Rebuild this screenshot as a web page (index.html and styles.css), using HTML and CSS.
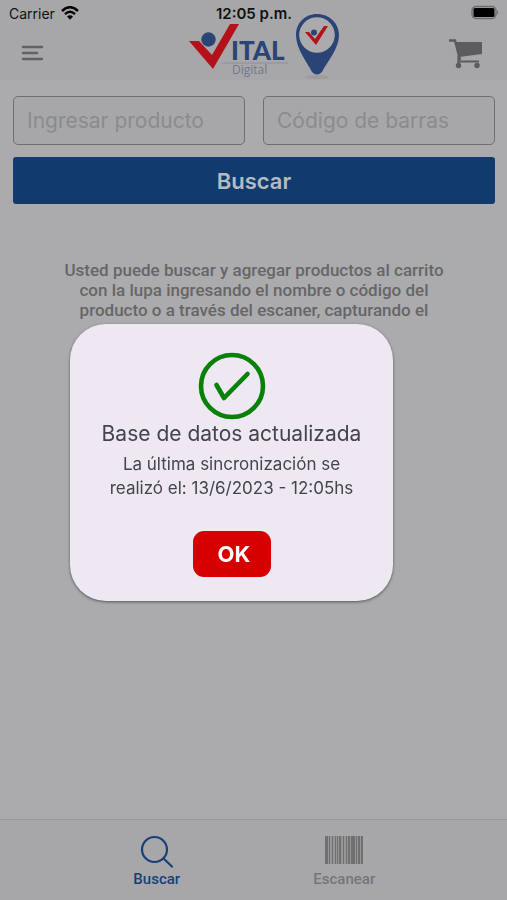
FILE: index.html
```html
<!DOCTYPE html>
<html lang="es">
<head>
    <meta charset="UTF-8">
    <meta name="viewport" content="width=device-width, initial-scale=1.0">
    <title>Vital Digital</title>
    <link rel="stylesheet" href="styles.css">
</head>
<body>
    <!-- Header -->
    <header class="header">
        <div class="status-bar">
            <span class="carrier">Carrier
                <svg width="18" height="14" viewBox="0 0 18 14">
                    <path d="M1 5 Q9 -2.500 17 5" fill="none" stroke="#050505" stroke-width="2.600"/>
                    <path d="M4 8.200 Q9 3.500 14 8.200" fill="none" stroke="#050505" stroke-width="2.400"/>
                    <path d="M6 10.500 Q9 8 12 10.500 L9 13.800Z" fill="#050505"/>
                </svg>
            </span>
            <span class="clock">12:05 p.m.</span>
            <svg class="battery" width="28" height="16" viewBox="0 0 28 16">
                <rect x="1" y="1.500" width="24" height="12" rx="4" fill="none" stroke="#6b6b6d" stroke-width="1.300"/>
                <rect x="2.500" y="3" width="21" height="9" rx="1.500" fill="#000"/>
                <path d="M26 5 Q28 7.500 26 10Z" fill="#6b6b6d"/>
            </svg>
        </div>
        <div class="nav">
            <button type="button" class="icon-btn" aria-label="Menú">
                <svg width="22" height="16" viewBox="0 0 22 16" stroke="#626264" stroke-width="2.400" stroke-linecap="round">
                    <path d="M2 2H21M2 8H16M2 14H21"/>
                </svg>
            </button>
            <svg class="logo" width="151" height="66" viewBox="-1 0 151 66">
                <ellipse cx="127" cy="63" rx="12" ry="2" fill="#9c9c9e"/>
                <path d="M-1 27H9L22 41L40 10H49L23 55Z" fill="#b3121b"/>
                <circle cx="18.500" cy="25.500" r="7.200" fill="#2a4475"/>
                <path d="M32 49H98" stroke="#8990a2" stroke-width="1"/>
                <text class="logo-name" x="41" y="46">ITAL</text>
                <text class="logo-sub" x="42" y="60">Digital</text>
                <path d="M127 0C115 0 106 9 106 21C106 35 117 48 122 58Q127 63 132 58C137 48 149 35 149 21C149 9 139 0 127 0Z" fill="#2a4475"/>
                <circle cx="127" cy="21" r="17.800" fill="#ababad"/>
                <path d="M115 18H119L125 25L134 12H138L126 31Z" fill="#b3121b"/>
                <circle cx="124" cy="18.500" r="3" fill="#2a4475"/>
            </svg>
            <button type="button" class="icon-btn" aria-label="Carrito">
                <svg width="35" height="31" viewBox="0 0 35 31">
                    <path d="M0 2.500H6L11 22" fill="none" stroke="#5c5c5e" stroke-width="2.400"/>
                    <path d="M6 4H33V16L10 19Z" fill="#5c5c5e"/>
                    <path d="M9 23.500H30M9.500 18V27" stroke="#5c5c5e" stroke-width="2.200"/>
                    <circle cx="9.500" cy="27.500" r="2.700" fill="#5c5c5e"/>
                    <circle cx="28" cy="27.500" r="2.700" fill="#5c5c5e"/>
                </svg>
            </button>
        </div>
    </header>

    <!-- Search -->
    <main class="content">
        <form class="search-form">
            <input type="text" placeholder="Ingresar producto" aria-label="Ingresar producto">
            <input type="text" placeholder="Código de barras" aria-label="Código de barras">
            <button type="button" class="search-btn">Buscar</button>
        </form>
        <p class="help-text">Usted puede buscar y agregar productos al carrito con la lupa ingresando el nombre o código del producto o a través del escaner, capturando el código de barras del mismo.</p>
    </main>

    <!-- Bottom tabs -->
    <nav class="tabs">
        <a href="#buscar" class="tab active">
            <svg width="34" height="34" viewBox="0 0 34 34" fill="none" stroke="#173f78" stroke-width="2.200" stroke-linecap="round">
                <circle cx="14.500" cy="14.500" r="12.500"/>
                <path d="M23.500 23.500L32 31.500"/>
            </svg>
            Buscar
        </a>
        <a href="#escanear" class="tab">
            <svg width="38" height="34" viewBox="0 0 38 34" fill="#707072">
                <path d="M0 1H3V29H0ZM4 1H5V29H4ZM7 1H8V29H7ZM10 1H11V29H10ZM12 1H13V29H12ZM14 1H16V29H14ZM18 1H19V29H18ZM21 1H22V29H21ZM23 1H25V29H23ZM26 1H30V29H26ZM31 1H32V29H31ZM33 1H35V29H33ZM36 1H38V29H36Z"/>
                <path d="M0 1H38V29H0Z" opacity=".3"/>
            </svg>
            Escanear
        </a>
    </nav>

    <!-- Sync dialog -->
    <div class="overlay">
        <div class="dialog" role="dialog" aria-labelledby="dialogTitle">
            <svg width="68" height="68" viewBox="0 0 68 68" fill="none" stroke="#078207">
                <circle cx="34" cy="34" r="31" stroke-width="4.600"/>
                <path d="M18.500 33L26 46L49.500 22" stroke-width="4.600" stroke-linecap="round" stroke-linejoin="round"/>
            </svg>
            <h1 id="dialogTitle">Base de datos actualizada</h1>
            <p>La última sincronización se realizó el: 13/6/2023 - 12:05hs</p>
            <button type="button" class="ok-btn">OK</button>
        </div>
    </div>
</body>
</html>
```
FILE: styles.css
```css
* { margin: 0; padding: 0; box-sizing: border-box; }
body {
    font-family: Inter, "Liberation Sans", sans-serif;
    background-color: #ababad;
    display: flex;
    flex-direction: column;
    min-height: 100vh;
}
button {
    border: none;
    font-family: inherit;
    cursor: pointer;
}
svg {
    display: block;
}

/* Header */
.header {
    position: relative;
    background-color: #a7a7a9;
}
.status-bar {
    position: absolute;
    top: 0;
    left: 0;
    right: 0;
    height: 26px;
    padding: 0 8px 0 9px;
    display: grid;
    grid-template-columns: 1fr auto 1fr;
    align-items: center;
    font-size: 14px;
    color: #111;
}
.carrier {
    display: flex;
    align-items: center;
    gap: 6px;
}
.clock {
    font-size: 15px;
    font-weight: 600;
}
.battery {
    justify-self: end;
}
.nav {
    display: flex;
    justify-content: space-between;
    align-items: center;
    padding: 14px 23px 0 21px;
}
.icon-btn {
    background: none;
    padding-top: 12px;
}
.logo {
    margin-left: 36px;
}
.logo-name {
    font-family: Lato, sans-serif;
    font-size: 26px;
    font-weight: 900;
    fill: #2a4475;
}
.logo-sub {
    font-family: "Open Sans", sans-serif;
    font-size: 12px;
    fill: #70778d;
}

/* Search */
.content {
    flex: 1;
    padding: 16px 12px 0 13px;
}
.search-form {
    display: grid;
    grid-template-columns: 1fr 1fr;
    gap: 12px 18px;
}
.search-form input {
    width: 100%;
    height: 49px;
    padding: 0 13px;
    border: 1px solid #6f6f71;
    border-radius: 5px;
    background-color: #a7a7a9;
    font-family: inherit;
    font-size: 21px;
}
.search-form input::placeholder {
    color: #8b8b8d;
}
.search-btn {
    grid-column: 1 / 3;
    height: 47px;
    border-radius: 3px;
    background-color: #123b6d;
    color: #b7bac2;
    font-size: 22px;
    font-weight: 600;
}
.help-text {
    margin: 56px 45px 0;
    font-family: Roboto, sans-serif;
    font-size: 17px;
    font-weight: 500;
    line-height: 20px;
    text-align: center;
    color: #666668;
}

/* Bottom tabs */
.tabs {
    display: flex;
    padding: 0 69px 0 63px;
    height: 81px;
    background-color: #a7a7a9;
    border-top: 1px solid #98989a;
}
.tab {
    flex: 1;
    display: flex;
    flex-direction: column;
    align-items: center;
    gap: 1px;
    padding-top: 15px;
    font-family: Roboto, sans-serif;
    font-size: 15px;
    font-weight: 500;
    text-decoration: none;
    color: #767678;
}
.tab.active {
    color: #173f78;
}

/* Dialog */
.overlay {
    position: fixed;
    inset: 0;
    display: flex;
    align-items: center;
    padding: 25px 114px 0 70px;
}
.dialog {
    flex: 1;
    display: flex;
    flex-direction: column;
    align-items: center;
    padding: 28px 30px 24px;
    border-radius: 36px;
    background-color: #eee8f3;
    box-shadow: 0 1px 3px rgba(0, 0, 0, 0.5);
    color: #46434a;
    text-align: center;
}
.dialog h1 {
    font-size: 21px;
    font-weight: 400;
    line-height: 28px;
    white-space: nowrap;
}
.dialog p {
    font-size: 17px;
    line-height: 24px;
    margin-top: 4px;
}
.ok-btn {
    width: 78px;
    height: 46px;
    margin-top: 31px;
    padding-left: 5px;
    border-radius: 11px;
    background-color: #d60000;
    color: #fff;
    font-size: 22px;
    font-weight: 700;
}
```
